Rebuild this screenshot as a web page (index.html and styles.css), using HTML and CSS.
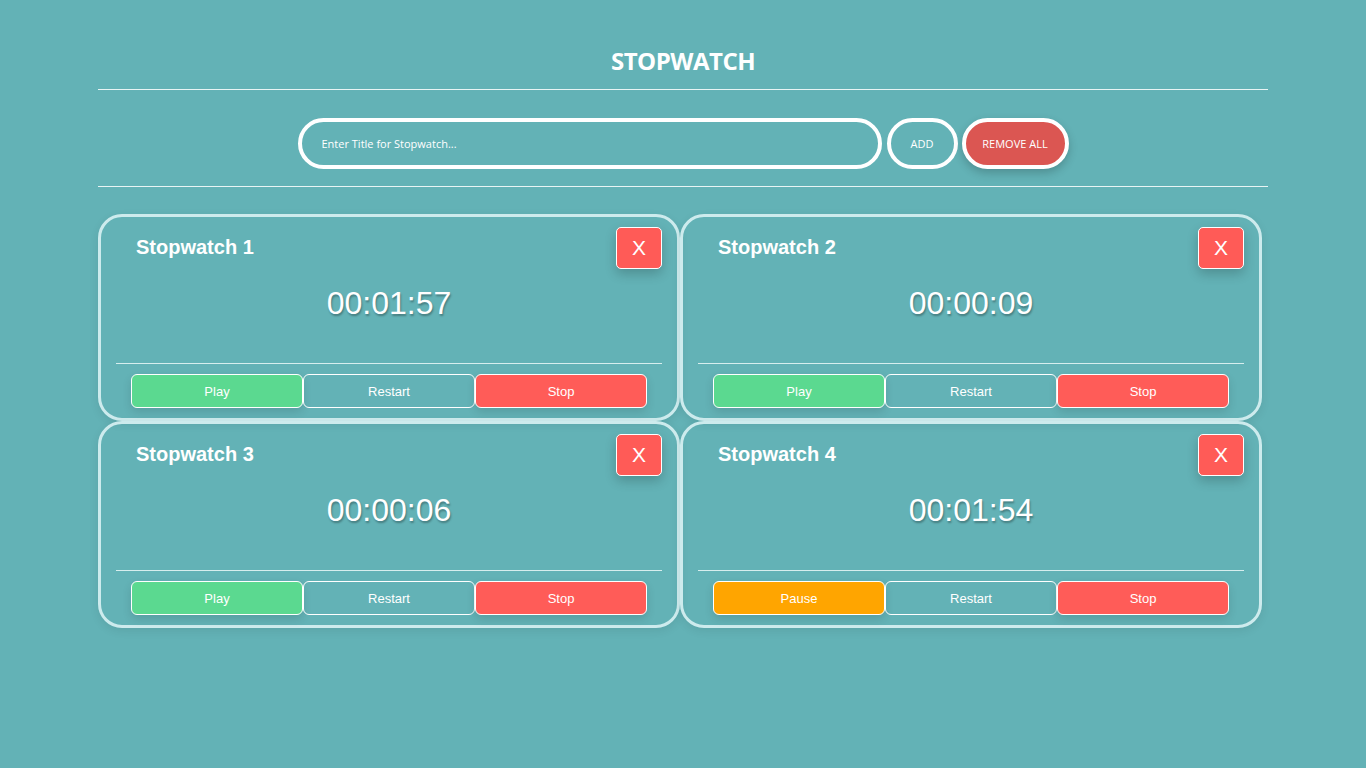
FILE: index.html
```html
<!DOCTYPE html>
<html lang="en">
<head>
<meta charset="utf-8">
<title>Stopwatch</title>
<link rel="stylesheet" href="styles.css">
</head>
<body>
<div class="container">
  <h1 class="title">STOPWATCH</h1>
  <hr class="rule">
  <form class="add-form">
    <input class="title-input" type="text" placeholder="Enter Title for Stopwatch...">
    <button type="button" class="pill pill-add">ADD</button>
    <button type="button" class="pill pill-remove">REMOVE ALL</button>
  </form>
  <hr class="rule">
  <div class="grid">
    <div class="card">
      <div class="card-head"><span class="card-title">Stopwatch 1</span><button class="close">X</button></div>
      <div class="time">00:01:57</div>
      <hr class="card-rule">
      <div class="controls"><button class="ctl play">Play</button><button class="ctl restart">Restart</button><button class="ctl stop">Stop</button></div>
    </div>
    <div class="card">
      <div class="card-head"><span class="card-title">Stopwatch 2</span><button class="close">X</button></div>
      <div class="time">00:00:09</div>
      <hr class="card-rule">
      <div class="controls"><button class="ctl play">Play</button><button class="ctl restart">Restart</button><button class="ctl stop">Stop</button></div>
    </div>
    <div class="card">
      <div class="card-head"><span class="card-title">Stopwatch 3</span><button class="close">X</button></div>
      <div class="time">00:00:06</div>
      <hr class="card-rule">
      <div class="controls"><button class="ctl play">Play</button><button class="ctl restart">Restart</button><button class="ctl stop">Stop</button></div>
    </div>
    <div class="card">
      <div class="card-head"><span class="card-title">Stopwatch 4</span><button class="close">X</button></div>
      <div class="time">00:01:54</div>
      <hr class="card-rule">
      <div class="controls"><button class="ctl pause">Pause</button><button class="ctl restart">Restart</button><button class="ctl stop">Stop</button></div>
    </div>
  </div>
</div>
</body>
</html>
```

FILE: styles.css
```css
* { box-sizing: border-box; }
html, body { margin: 0; padding: 0; }
body {
  background: #63b2b6;
  color: #fff;
  font-family: "Liberation Sans", Arial, sans-serif;
  height: 768px;
}
.container {
  width: 1170px;
  margin: 0 auto;
}
.title {
  margin: 0;
  padding-top: 46px;
  height: 89px;
  font-family: "Open Sans", sans-serif;
  font-weight: 700;
  font-size: 24px;
  line-height: 30px;
  text-align: center;
  letter-spacing: -0.5px;
}
.rule {
  margin: 0;
  border: 0;
  border-top: 1px solid #e8f4f4;
  height: 0;
}
.add-form {
  display: flex;
  justify-content: center;
  align-items: center;
  gap: 5px;
  padding: 28px 0 17px;
  height: 96px;
}
.title-input {
  width: 584px;
  height: 51px;
  border: 4px solid #fff;
  border-radius: 26px;
  background: transparent;
  color: #fff;
  padding: 0 20px;
  font-family: "Open Sans", sans-serif;
  font-size: 11px;
  outline: none;
}
.title-input::placeholder { color: #fff; opacity: 1; }
.pill {
  height: 51px;
  border: 4px solid #fff;
  border-radius: 26px;
  color: #fff;
  font-family: "Open Sans", sans-serif;
  font-size: 11px;
  padding: 0;
}
.pill-add {
  width: 71px;
  background: transparent;
}
.pill-remove {
  width: 107px;
  background: #db5652;
  margin-left: -1px;
  box-shadow: 0 4px 10px rgba(0, 0, 0, 0.2);
}
.grid {
  display: grid;
  grid-template-columns: 582px 582px;
  column-gap: 0;
  row-gap: 0;
  margin-top: 27px;
}
.card {
  border: 3px solid #cdebed;
  border-radius: 24px;
  padding: 10px 15px 10px;
  box-shadow: 0 3px 10px rgba(0, 0, 0, 0.08);
}
.card-head {
  display: flex;
  justify-content: space-between;
  align-items: center;
  height: 42px;
}
.card-title {
  padding-left: 20px;
  padding-bottom: 2px;
  font-weight: 700;
  font-size: 20px;
}
.close {
  width: 46px;
  height: 42px;
  background: #ff5b57;
  border: 1px solid #fff;
  border-radius: 5px;
  color: #fff;
  font-family: "Liberation Sans", Arial, sans-serif;
  font-size: 21px;
  padding: 0;
  box-shadow: 0 5px 12px rgba(0, 0, 0, 0.2);
}
.time {
  margin-top: 16px;
  height: 37px;
  line-height: 37px;
  text-align: center;
  font-size: 32px;
  text-shadow: 1px 2px 2px rgba(0, 0, 0, 0.3);
}
.card-rule {
  margin: 41px 0 0;
  border: 0;
  border-top: 1px solid #d7eeee;
  height: 0;
}
.controls {
  display: flex;
  padding: 10px 15px 0;
}
.ctl {
  flex: 1;
  height: 34px;
  border: 1px solid #fff;
  border-radius: 6px;
  color: #fff;
  background: transparent;
  font-family: "Liberation Sans", Arial, sans-serif;
  font-size: 13px;
  padding: 0;
  box-shadow: 0 4px 10px rgba(0, 0, 0, 0.12);
}
.play { background: #5bd990; }
.stop { background: #ff5c58; }
.pause { background: #ffa500; }
.restart { background: transparent; box-shadow: none; }
```
